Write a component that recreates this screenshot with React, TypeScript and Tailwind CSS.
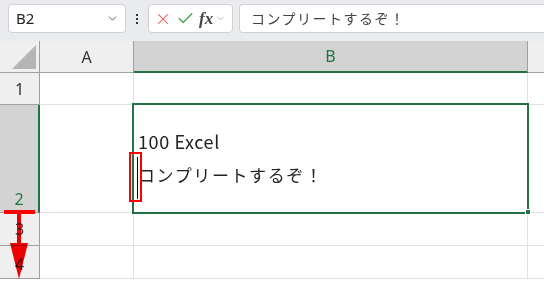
import { X, Check, ChevronDown } from "lucide-react";

const font = { fontFamily: '"Noto Sans CJK JP", "Noto Sans", sans-serif' };

export default function App() {
  return (
    <div
      className="relative h-[284px] w-[544px] overflow-hidden bg-white font-['Noto_Sans','Noto_Sans_CJK_JP',sans-serif]"
    >
      {/* 数式バー */}
      <div className="flex h-[41px] items-start gap-[6px] bg-[#eaebee] pl-[8px] pt-[4px]">
        <div className="flex h-[29px] w-[118px] items-center justify-between rounded-[4px] border border-[#d1d1d1] bg-white pl-[7px] pr-[6px]">
          <span className="text-[15px] text-[#222]">B2</span>
          <ChevronDown size={13} strokeWidth={1.6} className="text-[#444]" />
        </div>
        <div className="flex h-[29px] w-[10px] flex-col items-center justify-center gap-[2px]">
          <span className="h-[2px] w-[2px] bg-[#333]" />
          <span className="h-[2px] w-[2px] bg-[#333]" />
          <span className="h-[2px] w-[2px] bg-[#333]" />
        </div>
        <div className="flex h-[29px] w-[85px] items-center rounded-[4px] border border-[#d1d1d1] bg-white pl-[5px]">
          <X size={18} strokeWidth={1.4} className="text-[#e5504e]" />
          <Check size={19} strokeWidth={1.6} className="ml-[4px] text-[#43a047]" />
          <span className="ml-[4px] font-['Liberation_Serif',serif] text-[17px] font-bold italic leading-none text-[#444]">
            fx
          </span>
          <ChevronDown size={11} strokeWidth={1.5} className="ml-[2px] text-[#999]" />
        </div>
        <div className="flex h-[29px] flex-1 items-center rounded-l-[4px] border border-r-0 border-[#d1d1d1] bg-white pl-[11px]">
          <span style={font} className="text-[14px] tracking-[1.5px] text-[#444]">
            コンプリートするぞ！
          </span>
        </div>
      </div>

      {/* シート */}
      <div className="grid grid-cols-[40px_94px_394px_1fr] grid-rows-[32px_32px_108px_33px_33px_1fr] text-[#333]">
        {/* ヘッダー行 */}
        <div className="relative border-r border-b border-[#a0a0a0] bg-[#efefef]">
          <div className="absolute left-[12px] top-[4px] h-[24px] w-[24px] bg-[#b5b5b5] [clip-path:polygon(100%_0,100%_100%,0_100%)]" />
        </div>
        <div className="flex items-center justify-center border-r border-b border-[#a0a0a0] bg-[#efefef] text-[16px]">
          A
        </div>
        <div className="flex items-center justify-center border-r border-b-2 border-r-[#a0a0a0] border-b-[#217346] bg-[#d3d3d3] text-[16px] text-[#217346]">
          B
        </div>
        <div className="border-b border-[#a0a0a0] bg-[#efefef]" />

        {/* 1 */}
        <div className="flex items-center justify-center border-r border-b border-[#a0a0a0] bg-[#efefef] text-[16px]">
          1
        </div>
        <div className="border-r border-b border-[#e1e1e1]" />
        <div className="border-r border-b border-[#e1e1e1]" />
        <div className="border-b border-[#e1e1e1]" />

        {/* 2 */}
        <div className="flex items-end justify-center border-r-2 border-b border-r-[#217346] border-b-[#a0a0a0] bg-[#d3d3d3] pb-[1px] text-[16px] text-[#217346]">
          2
        </div>
        <div className="border-r border-b border-[#e1e1e1]" />
        <div style={font} className="border-r border-b border-[#e1e1e1] pl-[4px] pt-[20px] text-[17px] leading-[33px] text-[#222]">
          <div className="text-[18px] tracking-[0.6px]">100 Excel</div>
          <div className="tracking-[1.6px]">コンプリートするぞ！</div>
        </div>
        <div className="border-b border-[#e1e1e1]" />

        {/* 3 */}
        <div className="flex items-center justify-center border-r border-b border-[#a0a0a0] bg-[#efefef] text-[16px]">
          3
        </div>
        <div className="border-r border-b border-[#e1e1e1]" />
        <div className="border-r border-b border-[#e1e1e1]" />
        <div className="border-b border-[#e1e1e1]" />

        {/* 4 */}
        <div className="flex items-center justify-center border-r border-b border-[#a0a0a0] bg-[#efefef] pt-[4px] text-[16px]">
          4
        </div>
        <div className="border-r border-b border-[#e1e1e1]" />
        <div className="border-r border-b border-[#e1e1e1]" />
        <div className="border-b border-[#e1e1e1]" />

        {/* 5 */}
        <div className="border-r border-[#a0a0a0] bg-[#efefef]" />
        <div className="border-r border-[#e1e1e1]" />
        <div className="border-r border-[#e1e1e1]" />
        <div />
      </div>

      {/* 選択枠 */}
      <div className="absolute left-[132px] top-[103px] h-[111px] w-[397px] border-2 border-[#217346]" />
      <div className="absolute left-[525px] top-[209px] h-[6px] w-[6px] border border-white bg-[#217346]" />

      {/* カーソル */}
      <div className="absolute left-[137px] top-[157px] h-[42px] w-[1px] bg-black" />
      <div className="absolute left-[129px] top-[152px] h-[50px] w-[13px] border-2 border-[#ff0000]" />

      {/* 矢印 */}
      <div className="absolute left-[4px] top-[210px] h-[4px] w-[31px] bg-[#ff0000]" />
      <div className="absolute left-[17px] top-[212px] h-[34px] w-[4px] bg-[#ff0000] mix-blend-multiply" />
      <svg className="absolute left-[10px] top-[243px] mix-blend-multiply" width="18" height="36" viewBox="0 0 18 36">
        <polygon points="0,0 18,0 9,36" fill="#ff0000" />
      </svg>
    </div>
  );
}
